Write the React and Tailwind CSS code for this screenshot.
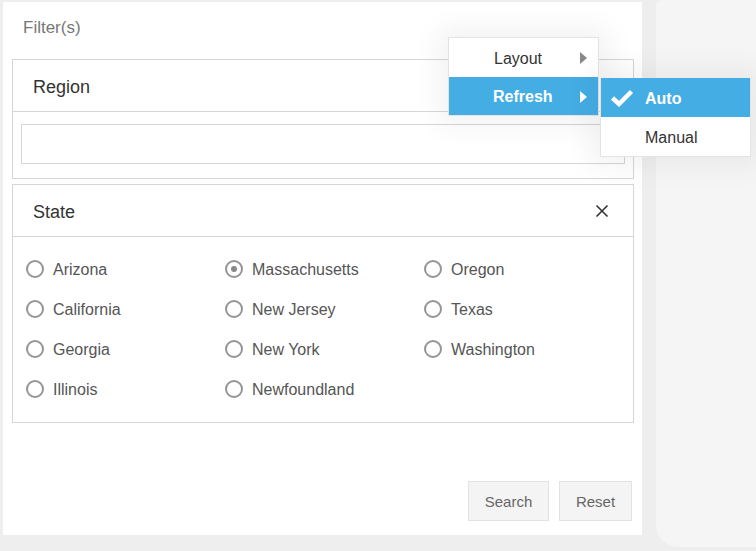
import React from "react";

const states = [
  ["Arizona", "Massachusetts", "Oregon"],
  ["California", "New Jersey", "Texas"],
  ["Georgia", "New York", "Washington"],
  ["Illinois", "Newfoundland", null],
];

function Radio({ label, checked }) {
  return (
    <div className="flex items-center h-[40px]">
      <span className="w-[18px] h-[18px] rounded-full border-2 border-[#959595] flex items-center justify-center shrink-0">
        {checked && <span className="w-[6px] h-[6px] rounded-full bg-[#888]" />}
      </span>
      <span className="ml-[9px] pt-[2px] text-[16px] text-[#555]">{label}</span>
    </div>
  );
}

function Arrow({ color }) {
  return (
    <svg width="7" height="12" viewBox="0 0 7 12" className="absolute left-[131px] top-[14px]">
      <polygon points="0,0 7,6 0,12" fill={color} />
    </svg>
  );
}

export default function App() {
  return (
    <div
      className="relative w-[756px] h-[551px] bg-[#eeeeee] overflow-hidden"
      style={{ fontFamily: '"Liberation Sans", Arial, sans-serif' }}
    >
      <div className="absolute left-[656px] top-0 right-0 bottom-[4px] bg-[#f5f5f5] rounded-bl-[22px] rounded-tl-[6px]" />

      <div className="absolute left-[3px] top-[2px] w-[639px] h-[533px] bg-white flex flex-col px-[9px] pr-[8px]">
        <div className="h-[57px] pt-[16px] pl-[11px] text-[17px] leading-[20px] text-[#777]">Filter(s)</div>

        <div className="border border-[#d6d6d6]">
          <div className="h-[52px] border-b border-[#d6d6d6] flex items-center pt-[3px] pl-[20px] text-[18px] text-[#333]">Region</div>
          <div className="pt-[12px] pb-[14px] px-[8px]">
            <div className="h-[40px] border border-[#d6d6d6]" />
          </div>
        </div>

        <div className="mt-[5px] border border-[#d6d6d6]">
          <div className="h-[52px] border-b border-[#d6d6d6] flex items-center justify-between pl-[20px] pr-[24px] text-[18px] text-[#333]">
            <span className="pt-[3px]">State</span>
            <svg width="14" height="14" viewBox="0 0 14 14">
              <path d="M1.5 1.5 L12.5 12.5 M12.5 1.5 L1.5 12.5" stroke="#333" strokeWidth="1.6" />
            </svg>
          </div>
          <div className="pt-[12px] pb-[13px] pl-[13px]">
            {states.map((row, i) => (
              <div key={i} className="grid grid-cols-[199px_199px_199px]">
                {row.map((s, j) => (
                  <div key={j}>{s && <Radio label={s} checked={s === "Massachusetts"} />}</div>
                ))}
              </div>
            ))}
          </div>
        </div>

        <div className="mt-auto mb-[14px] flex justify-end gap-[10px] pr-[2px]">
          <button className="w-[81px] h-[40px] pt-[2px] bg-[#f4f4f4] border border-[#e2e2e2] text-[15px] text-[#666]">Search</button>
          <button className="w-[73px] h-[40px] pt-[2px] bg-[#f4f4f4] border border-[#e2e2e2] text-[15px] text-[#666]">Reset</button>
        </div>
      </div>

      <div className="absolute left-[448px] top-[37px] w-[151px] bg-white border border-[#e4e4e4] shadow-[0_0_26px_10px_rgba(0,0,0,0.05)]">
        <div className="relative h-[39px] flex items-center pt-[2px] pl-[45px] text-[16px] text-[#333]">
          Layout
          <Arrow color="#888" />
        </div>
        <div className="relative h-[38px] flex items-center pt-[2px] pl-[44px] text-[16px] font-bold text-white bg-[#44ade4]">
          Refresh
          <Arrow color="#fff" />
        </div>
      </div>

      <div className="absolute left-[600px] top-[78px] w-[151px] bg-white border border-[#e4e4e4] border-t-0 shadow-[0_0_26px_10px_rgba(0,0,0,0.05)]">
        <div className="h-[39px] flex items-center pl-[9px] text-[16px] font-bold text-white bg-[#44ade4]">
          <svg width="24" height="18" viewBox="0 0 24 18" className="mr-[11px]">
            <polyline points="2.5,9 9,15 21.5,2.5" fill="none" stroke="#fff" strokeWidth="4.5" />
          </svg>
          <span className="pt-[2px]">Auto</span>
        </div>
        <div className="h-[39px] flex items-center pt-[3px] pl-[44px] text-[16px] text-[#333]">Manual</div>
      </div>
    </div>
  );
}
